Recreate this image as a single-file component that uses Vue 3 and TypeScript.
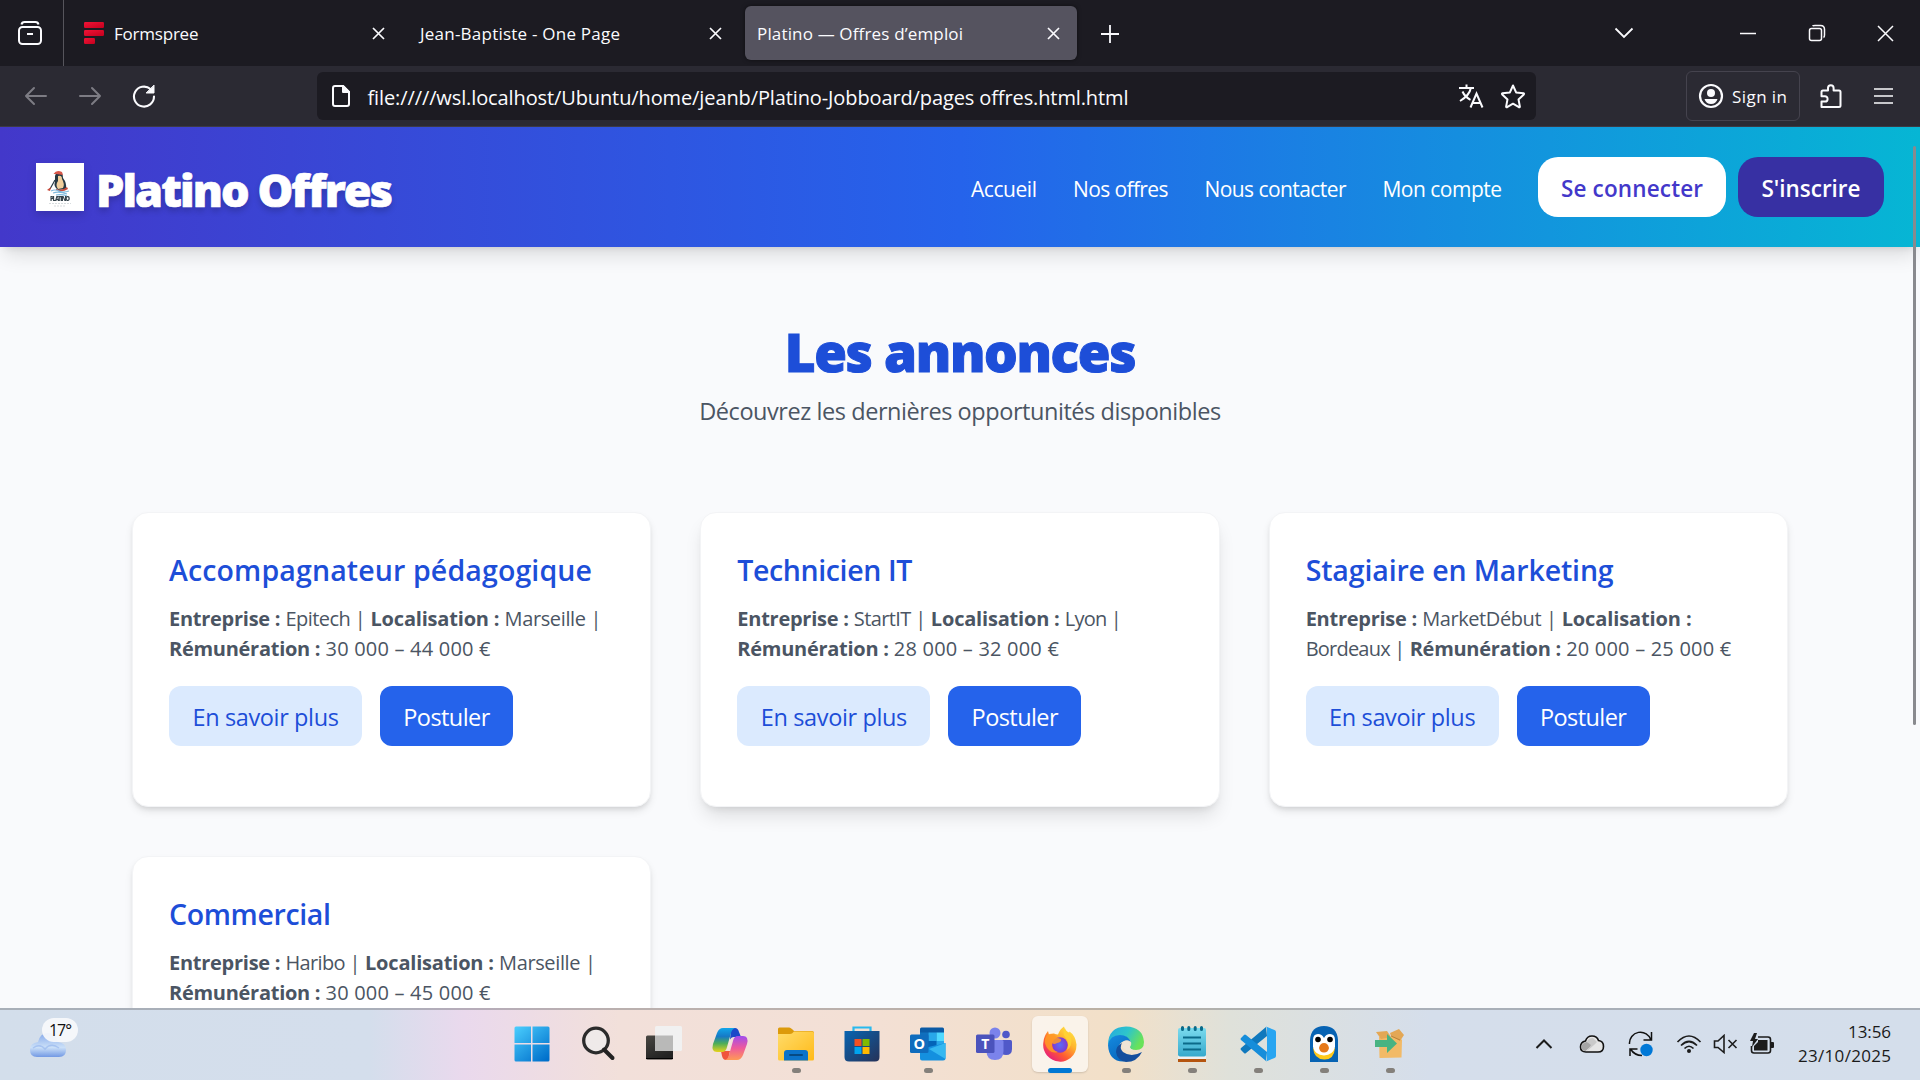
<script setup lang="ts">
import type { Directive } from 'vue'

interface Segment { text: string; width: number; bold?: boolean }
interface Offer { title: string; titleWidth: number; raised?: boolean; lines: Segment[][] }

/* Tracks a label so that it takes exactly the given width. */
const vFit: Directive<HTMLElement, number> = {
  mounted(el, binding) {
    const natural = el.getBoundingClientRect().width
    const count = (el.textContent ?? '').length
    el.style.letterSpacing = `${(binding.value - natural) / Math.max(1, count - 1)}px`
    el.style.width = `${binding.value}px`
  },
}

const company: Segment = { text: 'Entreprise : ', width: 116.5, bold: true }
const place: Segment = { text: 'Localisation : ', width: 134, bold: true }
const pay: Segment = { text: 'Rémunération : ', width: 156.5, bold: true }
const t = (text: string, width: number): Segment => ({ text, width })

const navLinks = [
  { label: 'Accueil', width: 66 },
  { label: 'Nos offres', width: 95.5 },
  { label: 'Nous contacter', width: 142 },
  { label: 'Mon compte', width: 119.5 },
]

const offers: Offer[] = [
  {
    title: 'Accompagnateur pédagogique',
    titleWidth: 423,
    lines: [
      [company, t('Epitech | ', 85), place, t('Marseille |', 97)],
      [pay, t('30 000 – 44 000 €', 165)],
    ],
  },
  {
    title: 'Technicien IT',
    titleWidth: 175,
    raised: true,
    lines: [
      [company, t('StartIT | ', 77), place, t('Lyon |', 57)],
      [pay, t('28 000 – 32 000 €', 165)],
    ],
  },
  {
    title: 'Stagiaire en Marketing',
    titleWidth: 308,
    lines: [
      [company, t('MarketDébut | ', 139.5), { text: 'Localisation :', width: 130, bold: true }],
      [t('Bordeaux | ', 104), pay, t('20 000 – 25 000 €', 165)],
    ],
  },
  {
    title: 'Commercial',
    titleWidth: 162,
    lines: [
      [company, t('Haribo | ', 79.5), place, t('Marseille |', 97)],
      [pay, t('30 000 – 45 000 €', 165)],
    ],
  },
]
</script>

<template>
  <div class="screen">
    <div class="tabbar">
      <div class="recent">
        <svg width="26" height="26" viewBox="0 0 26 26" fill="none" stroke="#fbfbfe" stroke-width="2">
          <rect x="2" y="7" width="22" height="17" rx="3.5" />
          <path d="M4.5 4.5Q5 2 7.5 2h11Q21 2 21.5 4.5M10 14h6" />
        </svg>
      </div>
      <div class="tab first">
        <svg width="20" height="22" viewBox="0 0 20 22">
          <defs><linearGradient id="fs" x2="1" y2="1"><stop stop-color="#f01436" /><stop offset="1" stop-color="#c4001e" /></linearGradient></defs>
          <g fill="url(#fs)"><rect width="20" height="6" rx="1.2" /><rect y="8" width="20" height="6" rx="1.2" /><rect y="16" width="11" height="6" rx="1.2" /></g>
        </svg>
        <span v-fit="84.5" class="tab-label gap">Formspree</span>
        <svg class="x" width="13" height="13" viewBox="0 0 13 13"><path d="M1 1l11 11M12 1L1 12" /></svg>
      </div>
      <div class="tab second">
        <span v-fit="200" class="tab-label">Jean-Baptiste - One Page</span>
        <svg class="x" width="13" height="13" viewBox="0 0 13 13"><path d="M1 1l11 11M12 1L1 12" /></svg>
      </div>
      <div class="tab active">
        <span v-fit="206" class="tab-label">Platino — Offres d’emploi</span>
        <svg class="x" width="13" height="13" viewBox="0 0 13 13"><path d="M1 1l11 11M12 1L1 12" /></svg>
      </div>
      <svg class="plus" width="20" height="20" viewBox="0 0 20 20" fill="none" stroke="#fbfbfe" stroke-width="1.8"><path d="M10 1v18M1 10h18" /></svg>
      <div class="window-actions">
        <svg width="20" height="20" viewBox="0 0 20 20"><path d="M1.5 5.5l8.5 8.5 8.5-8.5" stroke-width="1.8" /></svg>
        <svg class="wmin" width="16" height="20" viewBox="0 0 16 20"><path d="M0 10.5h16" /></svg>
        <svg class="wmax" width="18" height="18" viewBox="0 0 18 18"><rect x="1.5" y="4.5" width="12" height="12" rx="2" /><path d="M4.5 2Q5 1.5 7 1.5h5.500q4 0 4 4v5.500q0 2-1 2.500" /></svg>
        <svg class="wclose" width="17" height="17" viewBox="0 0 17 17"><path d="M1 1l15 15M16 1L1 16" /></svg>
      </div>
    </div>

    <div class="toolbar">
      <div class="history">
        <svg width="24" height="22" viewBox="0 0 24 22" fill="none" stroke="#7d7c84" stroke-width="2" stroke-linecap="round" stroke-linejoin="round"><path d="M22 11H2M10 3l-8 8 8 8" /></svg>
        <svg width="24" height="22" viewBox="0 0 24 22" fill="none" stroke="#7d7c84" stroke-width="2" stroke-linecap="round" stroke-linejoin="round"><path d="M2 11h20M14 3l8 8-8 8" /></svg>
        <svg width="24" height="24" viewBox="0 0 24 24" fill="none" stroke="#fbfbfe" stroke-width="2.1" stroke-linecap="round"><path d="M18.500 5A10 10 0 1 0 22 12.500" /><path d="M22 1.500V9h-7.500z" fill="#fbfbfe" stroke-width="1" /></svg>
      </div>
      <div class="urlbar">
        <svg width="20" height="24" viewBox="0 0 20 24" fill="none" stroke="#fbfbfe" stroke-width="2" stroke-linejoin="round"><path d="M12 2H4Q2 2 2 4v16q0 2 2 2h12q2 0 2-2V8z" /><path d="M12 2v6h6z" fill="#fbfbfe" /></svg>
        <span v-fit="761" class="url">file://///wsl.localhost/Ubuntu/home/jeanb/Platino-Jobboard/pages offres.html.html</span>
        <div class="url-actions">
          <svg width="26" height="26" viewBox="0 0 26 26" fill="none" stroke="#fbfbfe" stroke-width="2"><path d="M1 5h15M8.500 1.500V5M12.800 5C12 10 7 15 2 18M4.500 8.500C6 12 9 15 12.500 16.800" /><path d="M12.500 24.500L18.500 10.500l6 14M14.500 20h8" /></svg>
          <svg width="26" height="26" viewBox="0 0 26 26" fill="none" stroke="#fbfbfe" stroke-width="2" stroke-linejoin="round"><path d="M13 2.500l3.100 6.900 7.400.9q1 .3.300 1.100l-5.300 5 1.400 7.200q0 1-1 .6L13 20.700l-5.900 3.500q-1 .4-1-.6l1.400-7.200-5.300-5q-.7-.8.3-1.100l7.400-.9z" /></svg>
        </div>
      </div>
      <div class="signin">
        <svg width="26" height="26" viewBox="0 0 26 26"><circle cx="13" cy="13" r="11" fill="none" stroke="#fbfbfe" stroke-width="2.2" /><circle cx="13" cy="10" r="4" fill="#fbfbfe" /><path d="M6.500 16h13q-1.500 5-6.500 5t-6.500-5z" fill="#fbfbfe" /></svg>
        <span v-fit="55" class="tab-label">Sign in</span>
      </div>
      <svg class="puzzle" width="24" height="26" viewBox="0 0 24 26" fill="none" stroke="#fbfbfe" stroke-width="2" stroke-linejoin="round"><path d="M2.500 24V18.500H6a2.600 2.600 0 0 0 0-5.200H2.500V9Q2.500 7.500 4 7.500h5V5a2.800 2.800 0 0 1 5.600 0v2.500H20q1.500 0 1.500 1.500v13.500q0 1.500-1.500 1.500z" /></svg>
      <svg class="menu" width="19" height="18" viewBox="0 0 19 18" stroke="#fbfbfe" stroke-width="1.7"><path d="M0 2h19M0 9h19M0 16h19" /></svg>
    </div>

    <div class="page">
      <header class="site-header">
        <svg class="logo" width="48" height="48" viewBox="0 0 48 48">
          <rect width="48" height="48" fill="#fff" />
          <path d="M19 13q1-4 4-4 4 0 4 6 4 5 3 11l-8 1q-5-4-3-8z" fill="#263943" />
          <path d="M22 13q4-1 4 3 3 5 1 9l-5 1q-3-4 0-8z" fill="#f0ce9b" />
          <path d="M17.500 11q3-5 8.500-2l1 3-7-1z" fill="#d7584b" /><path d="M14 26l5-9" stroke="#263943" stroke-width="1.200" /><path d="M11 27l4-3-1 4z" fill="#c64a3b" /><path d="M20 26q6 2 11-2l1 2q-6 4-12 1z" fill="#c64a3b" />
          <path d="M15 28q4-2 8 0t10 0M17 30q6-2 14 1M20 32q6-1 11 1" stroke="#7eb9dc" stroke-width="1.200" fill="none" />
          <text x="14" y="38" font-size="6" font-weight="800" textLength="20" fill="#33424a">PLATINO</text>
          <path d="M13 40.500h22M18 43h12" stroke="#bcc4c8" stroke-width=".6" stroke-dasharray="2 1" />
        </svg>
        <span v-fit="297" class="brand">Platino Offres</span>
        <nav class="nav">
          <a v-for="link in navLinks" :key="link.label" v-fit="link.width">{{ link.label }}</a>
          <div class="auth">
            <button class="login"><span v-fit="142">Se connecter</span></button>
            <button class="signup"><span v-fit="99">S'inscrire</span></button>
          </div>
        </nav>
      </header>

      <main>
        <h1><span v-fit="352">Les annonces</span></h1>
        <p class="subtitle"><span v-fit="522">Découvrez les dernières opportunités disponibles</span></p>
        <div class="grid">
          <article v-for="offer in offers" :key="offer.title" class="card" :class="{ raised: offer.raised }">
            <h2><span v-fit="offer.titleWidth">{{ offer.title }}</span></h2>
            <div v-for="(line, i) in offer.lines" :key="i" class="line">
              <span v-for="(part, j) in line" :key="j" v-fit="part.width" :class="{ strong: part.bold }">{{ part.text }}</span>
            </div>
            <div class="actions">
              <button class="more"><span v-fit="146.5">En savoir plus</span></button>
              <button class="apply"><span v-fit="87">Postuler</span></button>
            </div>
          </article>
        </div>
      </main>
      <div class="scrollbar"></div>
    </div>

    <footer class="taskbar">
      <div class="weather">
        <svg width="38" height="26" viewBox="0 0 38 26">
          <defs><linearGradient id="cl" y2="1" x2="0"><stop stop-color="#86a9ea" /><stop offset=".6" stop-color="#cbe0f8" /><stop offset="1" stop-color="#7299e4" /></linearGradient></defs>
          <path d="M8 25q-7 0-7-7t8-8Q11 1 19 1t10 9q8 1 8 8 0 7-7 7z" fill="url(#cl)" /><path d="M4 16q7-5 12 1 6-7 14-1" fill="none" stroke="#91b3ed" stroke-width="1.500" opacity=".6" />
        </svg>
        <span class="temp"><span v-fit="23">17°</span></span>
      </div>

      <div class="apps">
        <div class="app">
          <svg width="36" height="36" viewBox="0 0 36 36"><defs><linearGradient id="wg" gradientUnits="userSpaceOnUse" x1="0" y1="0" x2="30" y2="36"><stop stop-color="#4cd0ff" /><stop offset="1" stop-color="#006fcb" /></linearGradient></defs><path fill="url(#wg)" d="M2 .5h15v16.500H.5V2Q.5.500 2 .5zM18.500.5H34q1.500 0 1.500 1.500v15h-17zM.5 18.500H17v17H2Q.5 35.500.5 34zM18.500 18.500h17V34q0 1.500-1.500 1.500H18.500z" /></svg>
        </div>
        <div class="app">
          <svg width="36" height="36" viewBox="0 0 36 36"><circle cx="16" cy="14.500" r="12.300" fill="#eee" fill-opacity=".7" stroke="#2b2b2b" stroke-width="3.300" /><path d="M24 23.500l8.500 8.500" stroke="#222" stroke-width="4" stroke-linecap="round" /></svg>
        </div>
        <div class="app">
          <svg width="36" height="36" viewBox="0 0 36 36"><defs><linearGradient id="tv" y2="1" x2=".5"><stop stop-color="#484742" /><stop offset="1" stop-color="#222" /></linearGradient></defs><rect y="9.500" width="27" height="24" rx="1.500" fill="url(#tv)" /><path d="M0 32.500h27" stroke="#000" /><rect x="9" y="0" width="27" height="25" rx="1.500" fill="#f1f1f1" /><path d="M9 9.500h18V25H9z" fill="#b9b9b8" /></svg>
        </div>
        <div class="app">
          <svg width="38" height="34" viewBox="0 0 38 34">
            <defs><linearGradient id="c1" x2="0" y2="1"><stop stop-color="#11a6ea" /><stop offset=".35" stop-color="#1679c6" /><stop offset=".65" stop-color="#4fae57" /><stop offset="1" stop-color="#e7d31b" /></linearGradient><linearGradient id="c2" x2="0" y2="1"><stop stop-color="#a04cee" /><stop offset=".5" stop-color="#ee5a9c" /><stop offset="1" stop-color="#ff9a55" /></linearGradient></defs>
            <path d="M20 1h4q3 0 4 4l2 5h-7q-3 0-4 3z" fill="#1b49c9" /><path d="M10 24h9l-2 9h-2q-3 0-4-4z" fill="#f0553c" />
            <path d="M12 1h12q-3 1-4 5l-4 14q-1 5-5 5H6q-6 0-4-8L6 6q2-5 6-5z" fill="url(#c1)" />
            <path d="M26 33H14q3-1 4-5l4-14q1-5 5-5h5q6 0 4 8l-4 11q-2 5-6 5z" fill="url(#c2)" />
            <path d="M21 11l-2 2-3 10 2-1z" fill="#f3e6df" />
          </svg>
        </div>
        <div class="app open">
          <svg width="36" height="34" viewBox="0 0 36 34"><defs><linearGradient id="fo" x2="1" y2="1"><stop stop-color="#ffdc6b" /><stop offset="1" stop-color="#ffba18" /></linearGradient></defs><path d="M0 2q0-1.500 1.500-1.500H11Q13 .5 16 4h18q2 0 2 2v8H0z" fill="#dc9a0b" /><path d="M0 7h12q2 0 4-2.500h18q2 0 2 2V32q0 1.500-1.500 1.500h-33Q0 33.500 0 32z" fill="url(#fo)" /><path d="M6 33.500V26q0-3 3-3h18q3 0 3 3v7.500z" fill="#0b73c9" /><rect x="11" y="27" width="14" height="2" rx="1" fill="#064a83" /></svg>
        </div>
        <div class="app">
          <svg width="36" height="36" viewBox="0 0 36 36"><defs><linearGradient id="st" x2="1" y2="1"><stop stop-color="#0864b1" /><stop offset="1" stop-color="#263258" /></linearGradient></defs><path d="M9.500 7V1.500h17V7" fill="none" stroke="#28b9ee" stroke-width="2.200" /><path d="M.5 5h35v26q0 4.500-4.500 4.500H5Q.5 35.500.5 31z" fill="url(#st)" /><path d="M10.500 13h7v7h-7z" fill="#f25022" /><path d="M18.500 13h7v7h-7z" fill="#7fba00" /><path d="M10.500 21h7v7h-7z" fill="#00a4ef" /><path d="M18.500 21h7v7h-7z" fill="#ffb900" /></svg>
        </div>
        <div class="app open">
          <svg width="36" height="34" viewBox="0 0 36 34"><path d="M10 2q0-1.500 1.500-1.500h21Q34 .5 34 2v20H10z" fill="#0a5aa5" /><path d="M10 5.500h8.500V14H10z" fill="#1070bd" /><path d="M18.500 5.500h8V14h-8z" fill="#28a8ea" /><path d="M26.500 5.500H34V14h-7.500z" fill="#50d9ff" /><path d="M18.500 14h8v9h-8z" fill="#0364b8" /><path d="M26.500 14H34v9h-7.500z" fill="#28a8ea" /><path d="M10 22l25.500-6v15q0 2.500-2.500 2.500H12q-2 0-2-2z" fill="#1490df" /><path d="M19 22l16.500 10V16z" fill="#35b8f1" /><rect y="7.500" width="18.500" height="18.500" rx="1.500" fill="#0f6cbd" /><text x="9.200" y="22" text-anchor="middle" font-size="14.500" font-weight="700" fill="#fff">O</text></svg>
        </div>
        <div class="app">
          <svg width="36" height="34" viewBox="0 0 36 34"><circle cx="19" cy="6" r="5.500" fill="#7b83eb" /><circle cx="30" cy="7.500" r="3.800" fill="#5059c9" /><path d="M24 13h10.500Q36 13 36 14.500V22q0 6-6 6-5 0-6-4z" fill="#5059c9" /><path d="M11 13h15q1.500 0 1.500 1.500V24q0 9-8.500 9t-8.500-9z" fill="#7b83eb" /><rect y="7.500" width="18.500" height="18.500" rx="1.500" fill="#4b53bc" /><text x="9.200" y="21.800" text-anchor="middle" font-size="14" font-weight="700" fill="#fff">T</text></svg>
        </div>
        <div class="app current">
          <svg width="36" height="36" viewBox="0 0 36 36"><defs><linearGradient id="ff" x1="1" x2=".2" y2="1"><stop stop-color="#fff44f" /><stop offset=".4" stop-color="#ffb52c" /><stop offset=".7" stop-color="#ff5a32" /><stop offset="1" stop-color="#e31587" /></linearGradient><radialGradient id="fp"><stop stop-color="#5b6df8" /><stop offset="1" stop-color="#8139cf" /></radialGradient></defs><path d="M22 .5q1 4 5 6l.5-1q6 4 7 13 0 9-6 13.500T17 35.500q-7-.5-12-6-5-6.500-3.500-14Q2 10 6 5l1 4q3-2 5-1.500 2 1 4 1Q18 3 22 .5z" fill="url(#ff)" /><circle cx="18" cy="19" r="7.800" fill="url(#fp)" /><path d="M5 9q4-2 7-.5 2 3.500 7 4.500 1 3-4 4-3 2-5 0-1 7 6 9-6 2-10-3T3 13z" fill="#ff9a24" opacity=".85" /><path d="M23 11q5 5 2 13 6-4 4-13-5-3-6-9-3 4 0 9z" fill="#ffd532" opacity=".8" /></svg>
        </div>
        <div class="app open">
          <svg width="36" height="36" viewBox="0 0 36 36"><defs><linearGradient id="e1" x2="1" y2=".4"><stop stop-color="#25a8e0" /><stop offset=".55" stop-color="#2ec5cb" /><stop offset="1" stop-color="#69e25a" /></linearGradient><linearGradient id="e2" x2=".5" y2="1"><stop stop-color="#168be0" /><stop offset="1" stop-color="#0868be" /></linearGradient></defs><path d="M0 19Q0 1 18 .5 35 1 36 16q0 8-8 8-6 0-6-3 3-4-1-8Q11 5 0 19z" fill="url(#e1)" /><path d="M0 19q2-10 12-10 8 0 11 7-3-3-7-1-7 3-5 11 2 7 9 9Q1 38 0 19z" fill="url(#e2)" /><path d="M14 17q-3 5 1 9 8 6 19 0-5 10-16 10-9-2-10-10 0-6 6-9z" fill="#134e9d" /><path d="M16 15q5-1 6 3-2 4 3 6-8 2-11-4 0-3 2-5z" fill="#eee4d7" /></svg>
        </div>
        <div class="app open">
          <svg width="28" height="36" viewBox="0 0 28 36"><defs><linearGradient id="np" x2="0" y2="1"><stop stop-color="#7bdbee" /><stop offset="1" stop-color="#36a9cc" /></linearGradient></defs><path d="M0 30h28v6H0z" fill="#b5550f" /><path d="M0 29h28v4H0z" fill="#f0f0f0" /><rect y="2" width="28" height="28.500" rx="2" fill="url(#np)" /><path d="M4.500 1.500v2M10.800 1.500v2M17.200 1.500v2M23.500 1.500v2" stroke="#0b6a89" stroke-width="3" stroke-linecap="round" /><path d="M5 11.500h18M5 17.500h18M5 23.500h18" stroke="#0b6a89" stroke-width="2" /></svg>
        </div>
        <div class="app open">
          <svg width="36" height="36" viewBox="0 0 36 36"><path d="M26 1l1 9L6 27q-1 1-2 0l-3-3q-1-1 0-2z" fill="#0f78bd" /><path d="M26 35l1-9L6 9Q5 8 4 9l-3 3q-1 1 0 2z" fill="#168dda" /><path d="M26 .5L34.500 4Q36 4.500 36 6v24q0 1.500-1.500 2L26 35.500q1-1 1-3v-29q0-2-1-3z" fill="#28a5f1" /></svg>
        </div>
        <div class="app open">
          <svg width="28" height="36" viewBox="0 0 28 36"><path d="M0 36V14Q1 0 14 0t14 14v22z" fill="#0763b3" /><path d="M3 22q1 11 11 11.500T25 22z" fill="#ffc91b" /><path d="M3 14q0-6 5-6 4 0 6 4 2-4 6-4 5 0 5 6v7q-2 8-11 8.500Q5 29 3 21z" fill="#fff" /><circle cx="8" cy="13.500" r="2.800" /><circle cx="20" cy="13.500" r="2.800" /><path d="M9 22q1-5 5-5t5 5q-1 4.500-5 4.500T9 22z" fill="#e67919" /></svg>
        </div>
        <div class="app open">
          <svg width="30" height="32" viewBox="0 0 30 32"><path d="M4 9h20l3 3-.5 17.500-22 .5z" fill="#f2ba67" /><path d="M1 4l11-1 4 6-10 2zM15 5l9-4 5 6-4 6-9-5z" fill="#e3a755" /><path d="M16 8l9 4" stroke="#b98239" /><path d="M0 12h12V6l10 9.500L12 25v-6H0z" fill="#48b382" /></svg>
        </div>
      </div>

      <div class="tray">
        <svg class="caret" width="18" height="12" viewBox="0 0 18 12" fill="none" stroke="#1c1c1c" stroke-width="2"><path d="M1.500 10L9 2.500l7.500 7.500" /></svg>
        <svg class="drive" width="26" height="20" viewBox="0 0 26 20"><path d="M7 18q-5.500 0-5.500-5t5-6Q8 2 13 2t6.500 4.500q5 .5 5 6T19 18z" fill="#e5e5e5" stroke="#111" stroke-width="1.600" /><path d="M6.500 17q-4 0-4-4t5-5q5 0 6 3z" fill="#a5a5a5" /><path d="M8 17l7-6 3-3-4-4Q9 4 8 8l4 3z" fill="#c9c9c9" /></svg>
        <svg class="sync" width="26" height="26" viewBox="0 0 26 26" fill="none" stroke="#111" stroke-width="1.500"><path d="M1.500 13A11 11 0 0 1 23 9M23.500 1v8h-8M2 25v-7h7.500M2.500 18q4 6.500 11.500 6.500" /><circle cx="18.500" cy="19" r="6.200" fill="#0078d7" stroke="none" /></svg>
        <svg class="wifi" width="26" height="20" viewBox="0 0 26 20" fill="none" stroke="#1c1c1c" stroke-width="1.700"><path d="M1.500 8Q13-4 24.500 8M5 11.500q8-8 16 0M8.500 14.500q4.500-4.500 9 0" /><circle cx="13" cy="17" r="2" fill="#1c1c1c" stroke="none" /></svg>
        <svg class="sound" width="25" height="20" viewBox="0 0 25 20" fill="none" stroke="#1c1c1c" stroke-width="1.600"><path d="M1.500 7v6.500h3.500L11 18.500V1.500L5 7zM15.500 6l8 8M23.500 6l-8 8" /></svg>
        <svg class="battery" width="26" height="22" viewBox="0 0 26 22"><path d="M9 4h10q2.500 0 2.500 2.500v11Q21.500 20 19 20H5q-2.500 0-2.500-2.500V13" fill="none" stroke="#1c1c1c" stroke-width="1.600" /><path d="M9 7h9.500v10.500H5V13l4-4z" fill="#1c1c1c" /><path d="M22 9h2q1 0 1 1v4q0 1-1 1h-2zM5 0L1 8h3l-1 6 6-8H6l2-6z" fill="#1c1c1c" /></svg>
        <div class="clock"><span v-fit="43">13:56</span><span v-fit="93">23/10/2025</span></div>
      </div>
    </footer>
  </div>
</template>

<style>
html, body { margin: 0; overflow: hidden; }
</style>

<style scoped>
* { box-sizing: border-box; }
.screen { width: 1920px; height: 1080px; display: flex; flex-direction: column; overflow: hidden; font-family: "Open Sans", "Noto Sans", sans-serif; }
.screen svg { flex: none; display: block; }
.screen span, .nav a { display: inline-block; white-space: pre; flex: none; }
button { border: 0; font-family: inherit; padding: 0; flex: none; display: flex; justify-content: center; align-items: flex-start; }

.tabbar { height: 66px; flex: none; background: #1c1b22; display: flex; align-items: center; }
.recent { width: 64px; height: 66px; border-right: 1px solid #56555c; padding: 20px 0 0 17px; }
.tab { display: flex; align-items: center; height: 54px; }
.tab .x { margin-left: auto; fill: none; stroke: #fbfbfe; stroke-width: 1.7; }
.tab-label { font-size: 17px; line-height: 26px; color: #fbfbfe; padding-top: 1px; }
.tab-label.gap { margin-left: 10px; }
.first { width: 343px; padding: 0 22.5px 0 20px; }
.second { width: 338px; padding: 0 23.5px 0 13px; }
.active { width: 332px; padding: 0 17.5px 0 12px; background: #55535f; border-radius: 6px; box-shadow: 0 0 4px rgba(0, 0, 0, .5); }
.plus { margin: 2px 0 0 22.5px; }
.window-actions { margin-left: auto; padding-right: 26px; display: flex; align-items: center; fill: none; stroke: #fbfbfe; stroke-width: 1.5; }
.wmin { margin-left: 106px; }
.wmax { margin-left: 52px; }
.wclose { margin-left: 51px; }

.toolbar { height: 61px; flex: none; background: #2b2a33; border-bottom: 1px solid #3c3a45; display: flex; align-items: center; }
.history { display: flex; gap: 30px; align-items: center; padding-left: 24px; width: 317px; }
.urlbar { width: 1219px; height: 48px; border-radius: 6px; background: #1c1b22; display: flex; align-items: center; padding: 0 10px 0 14px; }
.url { margin-left: 16.5px; font-size: 20px; line-height: 30px; color: #fbfbfe; padding-top: 3px; }
.url-actions { margin-left: auto; display: flex; gap: 16px; }
.signin { width: 114px; height: 50px; margin-left: 150px; border: 1px solid #45434e; border-radius: 6px; display: flex; align-items: center; padding-left: 11px; gap: 8px; }
.puzzle { margin-left: 19px; }
.menu { margin-left: 31px; }

.page { flex: 1; min-height: 0; background: #f9fafc; position: relative; overflow: hidden; }
.site-header { height: 120px; padding: 0 36px; display: flex; align-items: center; background: linear-gradient(90deg, #4338ca, #2563eb 50%, #06b6d4); box-shadow: 0 12px 19px -4px rgba(0, 0, 0, .12), 0 5px 8px -5px rgba(0, 0, 0, .12); position: relative; }
.logo { filter: drop-shadow(0 4px 4px rgba(0, 0, 0, .15)); }
.brand { margin-left: 12px; font-size: 45px; font-weight: 800; line-height: 60px; color: #fff; padding-top: 5px; text-shadow: 0 4px 6px rgba(0, 0, 0, .2); -webkit-text-stroke: .7px #fff; }
.nav { margin-left: auto; display: flex; align-items: center; gap: 36px; font-size: 21px; color: #fff; }
.nav a { line-height: 30px; padding-top: 4px; }
.auth { display: flex; gap: 12px; }
.auth button { height: 60px; border-radius: 20px; font-size: 22.5px; font-weight: 600; line-height: 64px; }
.login { width: 188px; background: #fff; color: #4338ca; }
.signup { width: 146px; background: #3730a3; color: #fff; }

main { padding: 74px 132px 0; }
h1 { margin: 0; text-align: center; font-size: 53px; font-weight: 800; line-height: 62px; color: #1d4ed8; -webkit-text-stroke: 1px #1d4ed8; }
.subtitle { margin: 13px 0 0; text-align: center; font-size: 23.5px; line-height: 30px; color: #4b5563; }
.grid { margin-top: 85.5px; display: grid; grid-template-columns: repeat(3, 1fr); gap: 49px; }
.card { height: 295px; padding: 35.5px 36px; background: #fff; border: 1px solid #f3f4f6; border-radius: 16px; box-shadow: 0 5px 8px -1px rgba(0, 0, 0, .1), 0 3px 5px -2px rgba(0, 0, 0, .1); }
.card.raised { box-shadow: 0 12px 19px -4px rgba(0, 0, 0, .12), 0 5px 8px -5px rgba(0, 0, 0, .12); }
h2 { margin: 0 0 10px; font-size: 28.5px; line-height: 45px; font-weight: 600; color: #1d4ed8; }
.line { height: 30px; font-size: 20px; line-height: 32px; color: #4b5563; display: flex; }
.strong { font-weight: 700; }
.actions { display: flex; gap: 18px; margin-top: 23px; }
.actions button { height: 60px; border-radius: 12px; font-size: 23.5px; line-height: 63px; }
.more { width: 193px; background: #dbeafe; color: #1d4ed8; }
.apply { width: 133px; background: #2563eb; color: #fff; }
.scrollbar { position: absolute; left: 1913px; top: 19px; width: 3px; height: 579px; border-radius: 2px; background: #898a8e; }

.taskbar { height: 72px; flex: none; display: flex; background: linear-gradient(90deg, #d3deeb 0, #d4deec 370px, #ead9ed 465px, #f2e0da 620px, #f3e0d5 860px, #f2e0c8 1120px, #dfe1da 1230px, #d5deeb 1430px, #d4deeb); border-top: 2px solid rgba(110, 110, 115, .42); background-origin: border-box; }
.weather { width: 498.5px; padding: 22px 0 0 29px; position: relative; }
.temp { position: absolute; left: 42px; top: 8px; width: 36px; height: 24px; border-radius: 12px; background: rgba(248, 249, 251, .93); text-align: center; font-size: 16px; line-height: 24px; color: #111; }
.apps { display: flex; }
.app { width: 56px; height: 56px; margin: 6px 5px 0; display: flex; align-items: center; justify-content: center; position: relative; border-radius: 6px; }
.app.current { background: rgba(255, 255, 255, .6); box-shadow: 0 1px 2px rgba(0, 0, 0, .15); }
.app.open::after, .app.current::after { content: ""; position: absolute; left: 24px; bottom: -1px; width: 9px; height: 5px; border-radius: 3px; background: #84807b; }
.app.current::after { left: 16px; width: 24px; background: #0078d4; }
.tray { margin-left: auto; padding: 0 29px 3px 0; display: flex; align-items: center; }
.drive { margin-left: 26px; }
.sync { margin-left: 23px; }
.wifi { margin-left: 22px; }
.sound { margin-left: 11px; }
.battery { margin-left: 11px; }
.clock { margin-left: 23.5px; display: flex; flex-direction: column; align-items: flex-end; font-size: 17px; line-height: 24px; color: #1a1a1a; }
</style>
